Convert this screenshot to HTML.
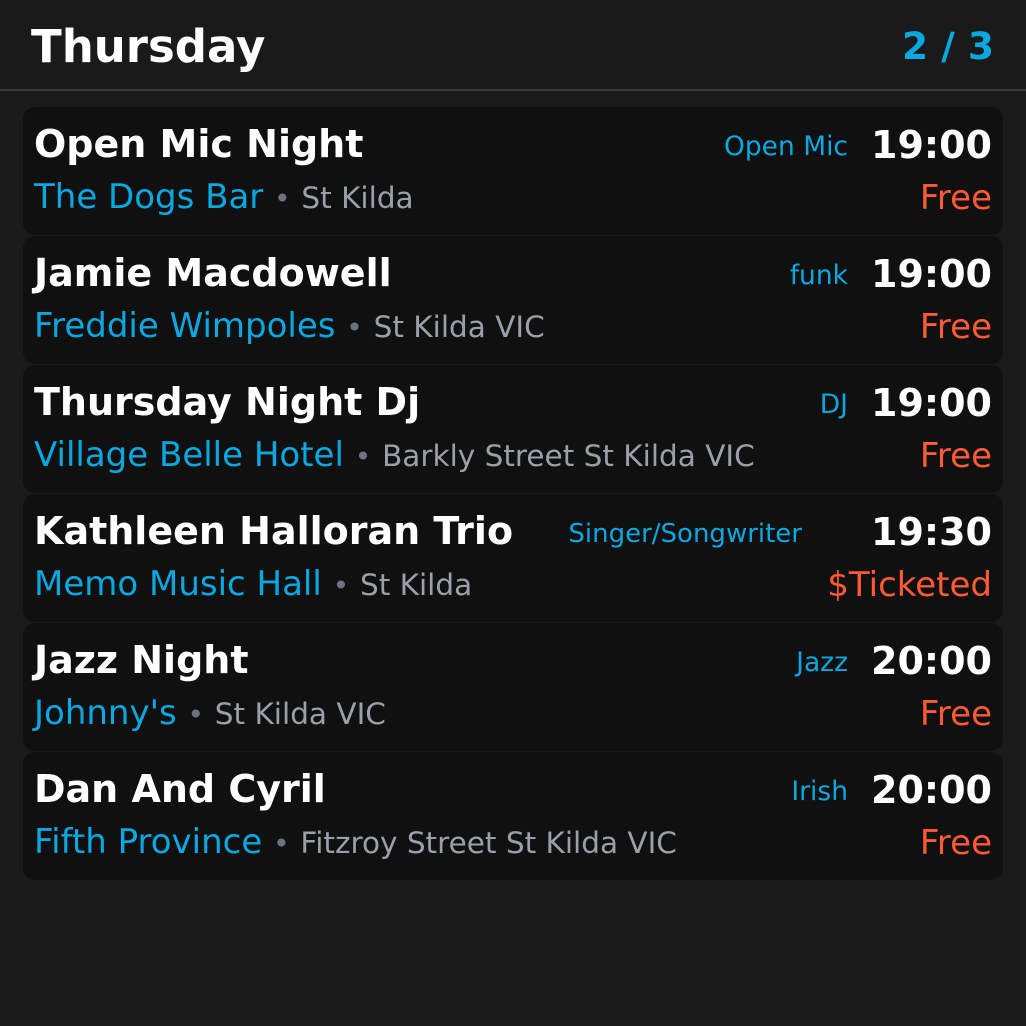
<!DOCTYPE html>
<html><head><meta charset="utf-8"><style>
*{margin:0;padding:0;box-sizing:border-box}
body{width:1026px;height:1026px;background:#1a1a1a;font-family:"DejaVu Sans","Liberation Sans",sans-serif;overflow:hidden;position:relative}
.hd{position:absolute;left:0;top:0;width:1026px;height:91px;border-bottom:2px solid #353a44}
.day{position:absolute;left:31px;top:24px;font-size:45px;font-weight:bold;color:#fff;line-height:1}
.pg{position:absolute;right:32px;top:28px;font-size:37.5px;font-weight:bold;color:#0aa8e0;line-height:1}
.c{position:absolute;left:23px;width:980px;height:128px;background:#101010;border-radius:12px}
.t{position:absolute;left:11px;top:18px;font-size:38px;font-weight:bold;color:#fff;line-height:1;white-space:nowrap}
.v{position:absolute;left:11px;top:73px;font-size:34px;color:#0aa8e0;line-height:1;white-space:nowrap}
.v span{color:#9aa0ab;font-size:29.5px}
.v b{font-weight:normal;color:#6b7280;font-size:28px}
.cat{position:absolute;right:155px;top:27px;font-size:26.5px;color:#0aa8e0;line-height:1;white-space:nowrap}
.tm{position:absolute;right:11px;top:19px;font-size:38px;font-weight:bold;color:#fff;line-height:1}
.pr{position:absolute;right:11px;top:74px;font-size:34px;color:#ff5a36;line-height:1}
</style></head><body>
<div class="hd"><div class="day">Thursday</div><div class="pg">2 / 3</div></div>

<div class="c" style="top:107px"><div class="t">Open Mic Night</div><div class="cat">Open Mic</div><div class="tm">19:00</div><div class="v">The Dogs Bar <b>•</b> <span>St Kilda</span></div><div class="pr">Free</div></div>
<div class="c" style="top:236px"><div class="t">Jamie Macdowell</div><div class="cat">funk</div><div class="tm">19:00</div><div class="v">Freddie Wimpoles <b>•</b> <span>St Kilda VIC</span></div><div class="pr">Free</div></div>
<div class="c" style="top:365px"><div class="t">Thursday Night Dj</div><div class="cat">DJ</div><div class="tm">19:00</div><div class="v">Village Belle Hotel <b>•</b> <span>Barkly Street St Kilda VIC</span></div><div class="pr">Free</div></div>
<div class="c" style="top:494px"><div class="t">Kathleen Halloran Trio</div><div class="cat" style="right:201px;font-size:26px">Singer/Songwriter</div><div class="tm">19:30</div><div class="v">Memo Music Hall <b>•</b> <span>St Kilda</span></div><div class="pr">$Ticketed</div></div>
<div class="c" style="top:623px"><div class="t">Jazz Night</div><div class="cat">Jazz</div><div class="tm">20:00</div><div class="v">Johnny's <b>•</b> <span>St Kilda VIC</span></div><div class="pr">Free</div></div>
<div class="c" style="top:752px"><div class="t">Dan And Cyril</div><div class="cat">Irish</div><div class="tm">20:00</div><div class="v">Fifth Province <b>•</b> <span>Fitzroy Street St Kilda VIC</span></div><div class="pr">Free</div></div>
</body></html>
